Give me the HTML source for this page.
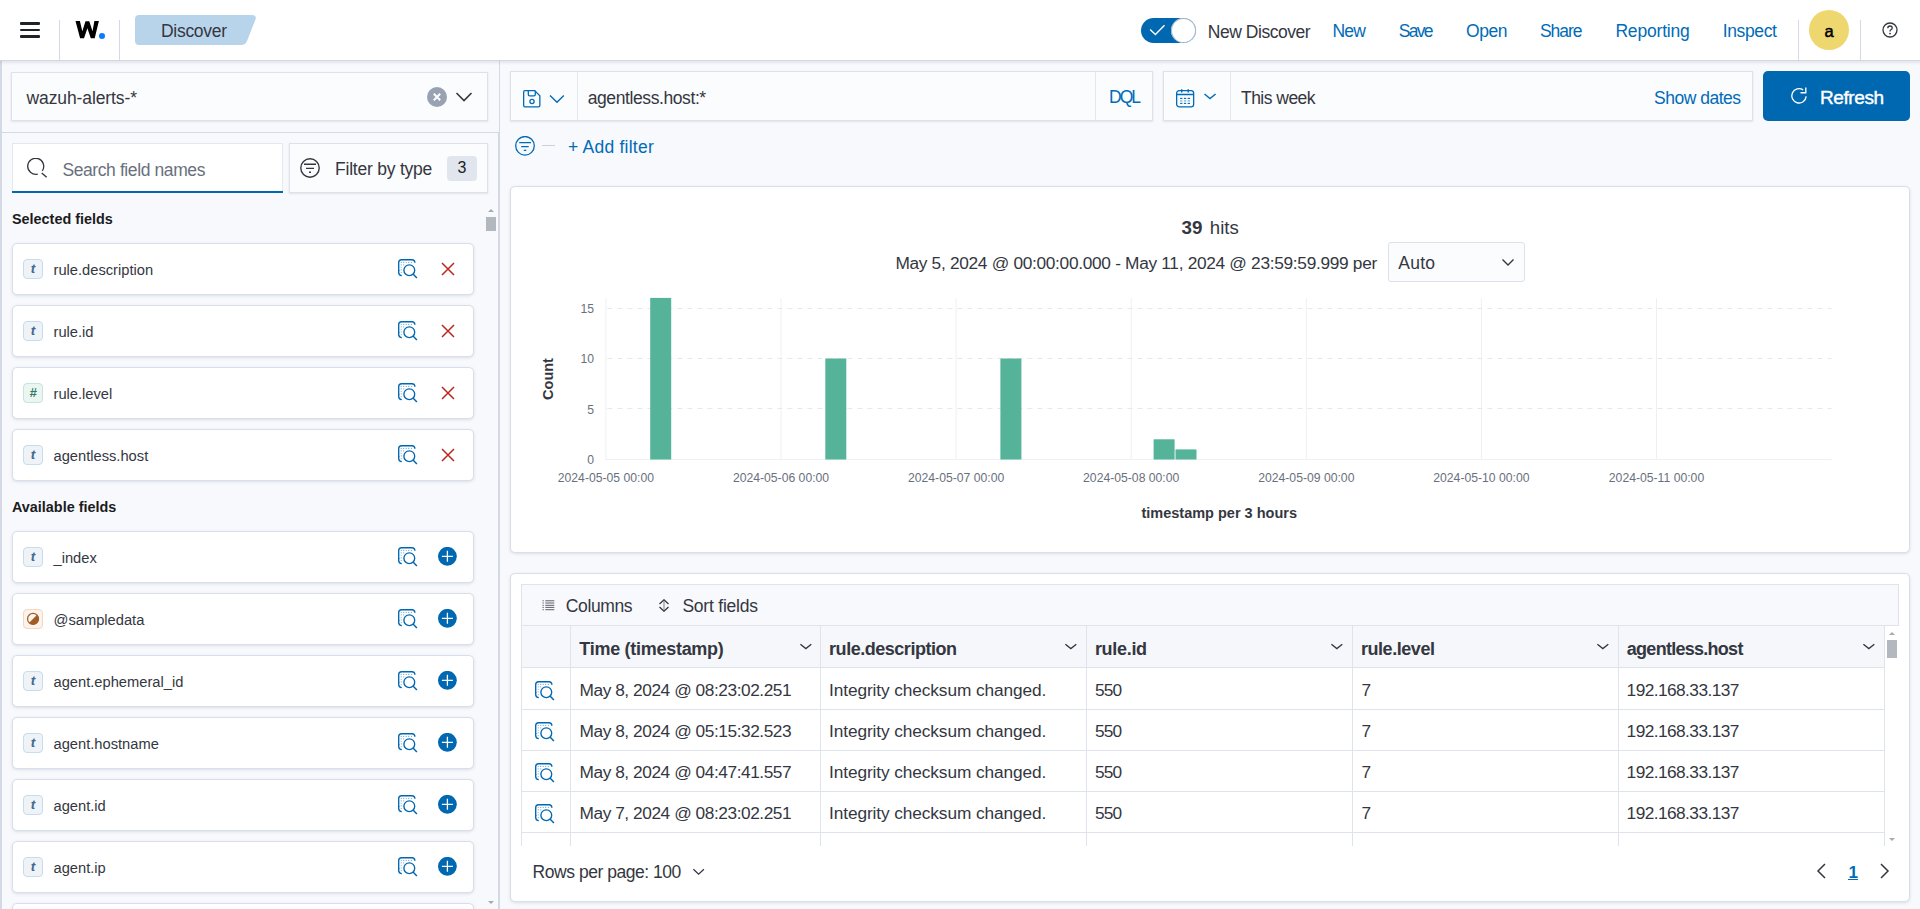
<!DOCTYPE html>
<html><head><meta charset="utf-8"><title>Discover</title>
<style>
html,body{margin:0;padding:0;}
body{width:1920px;height:909px;overflow:hidden;position:relative;background:#f8f9fc;font-family:"Liberation Sans",sans-serif;}
.t{position:absolute;line-height:1;white-space:nowrap;}
.r{position:absolute;}
</style></head><body>
<div class="r" style="left:0px;top:0px;width:1920px;height:60px;background:#fff;"></div>
<div class="r" style="left:0px;top:60px;width:1920px;height:1px;background:#d1d8e3;"></div>
<div class="r" style="left:20px;top:22.3px;width:20px;height:2.5px;background:#20222a;border-radius:1px;"></div>
<div class="r" style="left:20px;top:28.7px;width:20px;height:2.5px;background:#20222a;border-radius:1px;"></div>
<div class="r" style="left:20px;top:35.1px;width:20px;height:2.5px;background:#20222a;border-radius:1px;"></div>
<div class="r" style="left:59px;top:20px;width:1px;height:40px;background:#d3dae6;"></div>
<div class="r" style="left:119px;top:20px;width:1px;height:40px;background:#d3dae6;"></div>
<svg class="r" style="left:0;top:0" width="120" height="60" viewBox="0 0 120 60"><path d="M75.5 21 L79.9 21 L82.3 31.2 L85.5 21.3 L89.3 21.3 L92.5 31.2 L94.4 21 L98.9 21 L94.7 38.2 L90.8 38.2 L87.4 28.2 L84 38.2 L80.1 38.2 Z" fill="#000"/></svg>
<div class="r" style="left:99px;top:33px;width:5.8px;height:5.8px;background:#0a7bff;border-radius:50%;"></div>
<svg class="r" style="left:135px;top:15px;" width="122" height="30" viewBox="0 0 122 30" fill="none"><path d="M4 0 H117 Q122 0 120.5 4.5 L112 26 Q110.5 30 106 30 H4 Q0 30 0 26 V4 Q0 0 4 0 Z" fill="#b8d4ea"/></svg>
<div class="t" style="left:161.0px;top:22.99px;font-size:17.5px;color:#343741;letter-spacing:-0.295px;">Discover</div>
<div class="r" style="left:1141px;top:18px;width:55px;height:25px;background:#0067b1;border-radius:13px;"></div>
<svg class="r" style="left:1149px;top:23px;" width="17" height="14" viewBox="0 0 17 14" fill="none"><path d="M1.1 6.4 L6.4 11.6 L15.5 2.3" stroke="#fff" stroke-width="1.4" fill="none"/></svg>
<div class="r" style="left:1171px;top:18px;width:25px;height:25px;background:#fff;border-radius:50%;box-shadow:inset 0 0 0 1px #9fb3c8;"></div>
<div class="t" style="left:1207.8px;top:24.49px;font-size:17.5px;color:#343741;letter-spacing:-0.467px;">New Discover</div>
<div class="t" style="left:1332.5px;top:23.19px;font-size:17.5px;color:#006bb8;letter-spacing:-0.781px;">New</div>
<div class="t" style="left:1398.75px;top:23.19px;font-size:17.5px;color:#006bb8;letter-spacing:-1.73px;">Save</div>
<div class="t" style="left:1466.0px;top:23.19px;font-size:17.5px;color:#006bb8;letter-spacing:-0.438px;">Open</div>
<div class="t" style="left:1540.0px;top:23.19px;font-size:17.5px;color:#006bb8;letter-spacing:-1.05px;">Share</div>
<div class="t" style="left:1615.4px;top:23.19px;font-size:17.5px;color:#006bb8;letter-spacing:-0.185px;">Reporting</div>
<div class="t" style="left:1722.7px;top:23.19px;font-size:17.5px;color:#006bb8;letter-spacing:-0.37px;">Inspect</div>
<div class="r" style="left:1798px;top:20px;width:1px;height:40px;background:#d3dae6;"></div>
<div class="r" style="left:1809px;top:10px;width:40px;height:40px;background:#efd76f;border-radius:50%;"></div>
<div class="t" style="left:1829px;top:23.03px;font-size:16.5px;color:#000;transform:translateX(-50%);-webkit-text-stroke:0.5px #000;">a</div>
<div class="r" style="left:1860px;top:20px;width:1px;height:40px;background:#d3dae6;"></div>
<svg class="r" style="left:1882px;top:22px;" width="16" height="16" viewBox="0 0 16 16" fill="none"><circle cx="8" cy="8" r="7" stroke="#343741" stroke-width="1.3"/><path d="M5.8 6.2 Q5.8 4 8 4 Q10.2 4 10.2 6 Q10.2 7.3 8.6 8 Q8 8.4 8 9.6" stroke="#343741" stroke-width="1.3" fill="none"/><circle cx="8" cy="11.6" r="0.9" fill="#343741"/></svg>
<div class="r" style="left:0px;top:61px;width:500px;height:848px;background:#f8f9fc;"></div>
<div class="r" style="left:0px;top:61px;width:2px;height:848px;background:#d3dae6;"></div>
<div class="r" style="left:499px;top:61px;width:1px;height:848px;background:#d3dae6;"></div>
<div class="r" style="left:498px;top:132px;width:1px;height:777px;background:#d3dae6;"></div>
<div class="r" style="left:1px;top:132px;width:498px;height:1px;background:#d3dae6;"></div>
<div class="r" style="left:11px;top:72px;width:477px;height:49px;background:#fbfcfd;border:1px solid #dde2ea;box-sizing:border-box;box-shadow:0 1px 2px rgba(152,162,179,.25);"></div>
<div class="t" style="left:26.53px;top:90.19px;font-size:17.5px;color:#343741;letter-spacing:-0.105px;">wazuh-alerts-*</div>
<svg class="r" style="left:427px;top:87px;" width="20" height="20" viewBox="0 0 20 20" fill="none"><circle cx="10" cy="10" r="10" fill="#98a2b3"/><path d="M6.8 6.8 L13.2 13.2 M13.2 6.8 L6.8 13.2" stroke="#fff" stroke-width="2"/></svg>
<svg class="r" style="left:455px;top:91px;" width="18" height="12" viewBox="0 0 18 12" fill="none"><path d="M1.5 2 L9 9.5 L16.5 2" stroke="#343741" stroke-width="1.6" fill="none"/></svg>
<div class="r" style="left:12px;top:143px;width:271px;height:50px;background:#fff;border:1px solid #e4e8ef;border-bottom:none;box-sizing:border-box;"></div>
<div class="r" style="left:12px;top:191px;width:271px;height:2px;background:#0067b1;"></div>
<svg class="r" style="left:27px;top:158px;" width="21" height="21" viewBox="0 0 21 21" fill="none"><path d="M10.77 16.03 A8 8 0 1 1 15.25 12.89" stroke="#343741" stroke-width="1.3" fill="none"/><path d="M14.7 14.9 L19.65 19.3" stroke="#343741" stroke-width="1.4"/></svg>
<div class="t" style="left:62.4px;top:162.19px;font-size:17.5px;color:#69707d;letter-spacing:-0.4px;">Search field names</div>
<div class="r" style="left:289px;top:143px;width:199px;height:50px;background:#fbfcfd;border:1px solid #dde2ea;box-sizing:border-box;box-shadow:0 1px 2px rgba(152,162,179,.25);"></div>
<svg class="r" style="left:300px;top:158px;" width="20" height="20" viewBox="0 0 20 20" fill="none"><circle cx="10" cy="10" r="9.2" stroke="#343741" stroke-width="1.4"/><path d="M4 6.3 H16 M6 10.4 H14 M9 14.3 H11" stroke="#343741" stroke-width="1.4"/></svg>
<div class="t" style="left:335.0px;top:161.49px;font-size:17.5px;color:#343741;letter-spacing:-0.221px;">Filter by type</div>
<div class="r" style="left:447px;top:156px;width:30px;height:25px;background:#e0e5ee;border-radius:4px;"></div>
<div class="t" style="left:462px;top:159.96px;font-size:16px;color:#1a1c21;transform:translateX(-50%);">3</div>
<svg class="r" style="left:488px;top:209px;" width="6" height="3" viewBox="0 0 6 3" fill="none"><path d="M0 3 L3 0 L6 3 Z" fill="#a6aab1"/></svg>
<div class="r" style="left:486px;top:217px;width:10px;height:14px;background:#b3b7be;"></div>
<svg class="r" style="left:488px;top:901px;" width="6" height="3" viewBox="0 0 6 3" fill="none"><path d="M0 0 L3 3 L6 0 Z" fill="#a6aab1"/></svg>
<div class="t" style="left:12px;top:211.81px;font-size:14.4px;color:#1a1c21;font-weight:700;">Selected fields</div>
<div class="t" style="left:12px;top:499.81px;font-size:14.4px;color:#1a1c21;font-weight:700;">Available fields</div>
<div class="r" style="left:12px;top:243px;width:462px;height:52px;background:#fff;border:1px solid #d9dfe8;border-radius:5px;box-sizing:border-box;box-shadow:0 1px 3px rgba(152,162,179,.3);"></div>
<div class="r" style="left:23px;top:259px;width:20px;height:20px;background:#eef3f8;border:1px solid #c9dcec;border-radius:4px;box-sizing:border-box;"></div>
<div class="t" style="left:23px;top:261px;width:20px;text-align:center;font-size:13.5px;line-height:16px;font-weight:700;font-style:italic;color:#42698f;">t</div>
<div class="t" style="left:53.5px;top:262.56px;font-size:14.7px;color:#343741;">rule.description</div>
<svg class="r" style="left:398px;top:259px;" width="20" height="20" viewBox="0 0 20 20" fill="none"><path d="M0.7 12 V3.6 Q0.7 0.7 3.6 0.7 H14 Q16.8 0.7 16.9 3.8" stroke="#0067b1" stroke-width="1.35" fill="none"/><path d="M0.7 11 V13.6 Q0.7 16.5 3.8 16.6" stroke="#0067b1" stroke-width="1.35" fill="none"/><g fill="#0067b1" opacity="0.55"><circle cx="3.2" cy="3.4" r="0.55"/><circle cx="5.7" cy="3.4" r="0.6"/><circle cx="8.2" cy="3.4" r="0.55"/><circle cx="10.7" cy="3.4" r="0.6"/><circle cx="13.4" cy="3.4" r="0.55"/><circle cx="3.2" cy="5.8" r="0.6"/><circle cx="5.7" cy="5.8" r="0.6"/><circle cx="3.2" cy="8.3" r="0.55"/><circle cx="3.2" cy="10.8" r="0.6"/><circle cx="3.2" cy="13.6" r="0.55"/></g><circle cx="11.3" cy="11.2" r="5.4" stroke="#0067b1" stroke-width="1.35" fill="none"/><path d="M15 14.9 L18.9 18.9" stroke="#0067b1" stroke-width="1.45"/></svg>
<svg class="r" style="left:441px;top:262px;" width="14" height="14" viewBox="0 0 14 14" fill="none"><path d="M1 1 L13 13 M13 1 L1 13" stroke="#bd271e" stroke-width="1.5"/></svg>
<div class="r" style="left:12px;top:305px;width:462px;height:52px;background:#fff;border:1px solid #d9dfe8;border-radius:5px;box-sizing:border-box;box-shadow:0 1px 3px rgba(152,162,179,.3);"></div>
<div class="r" style="left:23px;top:321px;width:20px;height:20px;background:#eef3f8;border:1px solid #c9dcec;border-radius:4px;box-sizing:border-box;"></div>
<div class="t" style="left:23px;top:323px;width:20px;text-align:center;font-size:13.5px;line-height:16px;font-weight:700;font-style:italic;color:#42698f;">t</div>
<div class="t" style="left:53.5px;top:324.56px;font-size:14.7px;color:#343741;">rule.id</div>
<svg class="r" style="left:398px;top:321px;" width="20" height="20" viewBox="0 0 20 20" fill="none"><path d="M0.7 12 V3.6 Q0.7 0.7 3.6 0.7 H14 Q16.8 0.7 16.9 3.8" stroke="#0067b1" stroke-width="1.35" fill="none"/><path d="M0.7 11 V13.6 Q0.7 16.5 3.8 16.6" stroke="#0067b1" stroke-width="1.35" fill="none"/><g fill="#0067b1" opacity="0.55"><circle cx="3.2" cy="3.4" r="0.55"/><circle cx="5.7" cy="3.4" r="0.6"/><circle cx="8.2" cy="3.4" r="0.55"/><circle cx="10.7" cy="3.4" r="0.6"/><circle cx="13.4" cy="3.4" r="0.55"/><circle cx="3.2" cy="5.8" r="0.6"/><circle cx="5.7" cy="5.8" r="0.6"/><circle cx="3.2" cy="8.3" r="0.55"/><circle cx="3.2" cy="10.8" r="0.6"/><circle cx="3.2" cy="13.6" r="0.55"/></g><circle cx="11.3" cy="11.2" r="5.4" stroke="#0067b1" stroke-width="1.35" fill="none"/><path d="M15 14.9 L18.9 18.9" stroke="#0067b1" stroke-width="1.45"/></svg>
<svg class="r" style="left:441px;top:324px;" width="14" height="14" viewBox="0 0 14 14" fill="none"><path d="M1 1 L13 13 M13 1 L1 13" stroke="#bd271e" stroke-width="1.5"/></svg>
<div class="r" style="left:12px;top:367px;width:462px;height:52px;background:#fff;border:1px solid #d9dfe8;border-radius:5px;box-sizing:border-box;box-shadow:0 1px 3px rgba(152,162,179,.3);"></div>
<div class="r" style="left:23px;top:383px;width:20px;height:20px;background:#eaf6f1;border:1px solid #c4e5d8;border-radius:4px;box-sizing:border-box;"></div>
<div class="t" style="left:23px;top:385px;width:20px;text-align:center;font-size:13px;line-height:16px;font-weight:700;font-style:italic;color:#387765;">#</div>
<div class="t" style="left:53.5px;top:386.56px;font-size:14.7px;color:#343741;">rule.level</div>
<svg class="r" style="left:398px;top:383px;" width="20" height="20" viewBox="0 0 20 20" fill="none"><path d="M0.7 12 V3.6 Q0.7 0.7 3.6 0.7 H14 Q16.8 0.7 16.9 3.8" stroke="#0067b1" stroke-width="1.35" fill="none"/><path d="M0.7 11 V13.6 Q0.7 16.5 3.8 16.6" stroke="#0067b1" stroke-width="1.35" fill="none"/><g fill="#0067b1" opacity="0.55"><circle cx="3.2" cy="3.4" r="0.55"/><circle cx="5.7" cy="3.4" r="0.6"/><circle cx="8.2" cy="3.4" r="0.55"/><circle cx="10.7" cy="3.4" r="0.6"/><circle cx="13.4" cy="3.4" r="0.55"/><circle cx="3.2" cy="5.8" r="0.6"/><circle cx="5.7" cy="5.8" r="0.6"/><circle cx="3.2" cy="8.3" r="0.55"/><circle cx="3.2" cy="10.8" r="0.6"/><circle cx="3.2" cy="13.6" r="0.55"/></g><circle cx="11.3" cy="11.2" r="5.4" stroke="#0067b1" stroke-width="1.35" fill="none"/><path d="M15 14.9 L18.9 18.9" stroke="#0067b1" stroke-width="1.45"/></svg>
<svg class="r" style="left:441px;top:386px;" width="14" height="14" viewBox="0 0 14 14" fill="none"><path d="M1 1 L13 13 M13 1 L1 13" stroke="#bd271e" stroke-width="1.5"/></svg>
<div class="r" style="left:12px;top:429px;width:462px;height:52px;background:#fff;border:1px solid #d9dfe8;border-radius:5px;box-sizing:border-box;box-shadow:0 1px 3px rgba(152,162,179,.3);"></div>
<div class="r" style="left:23px;top:445px;width:20px;height:20px;background:#eef3f8;border:1px solid #c9dcec;border-radius:4px;box-sizing:border-box;"></div>
<div class="t" style="left:23px;top:447px;width:20px;text-align:center;font-size:13.5px;line-height:16px;font-weight:700;font-style:italic;color:#42698f;">t</div>
<div class="t" style="left:53.5px;top:448.56px;font-size:14.7px;color:#343741;">agentless.host</div>
<svg class="r" style="left:398px;top:445px;" width="20" height="20" viewBox="0 0 20 20" fill="none"><path d="M0.7 12 V3.6 Q0.7 0.7 3.6 0.7 H14 Q16.8 0.7 16.9 3.8" stroke="#0067b1" stroke-width="1.35" fill="none"/><path d="M0.7 11 V13.6 Q0.7 16.5 3.8 16.6" stroke="#0067b1" stroke-width="1.35" fill="none"/><g fill="#0067b1" opacity="0.55"><circle cx="3.2" cy="3.4" r="0.55"/><circle cx="5.7" cy="3.4" r="0.6"/><circle cx="8.2" cy="3.4" r="0.55"/><circle cx="10.7" cy="3.4" r="0.6"/><circle cx="13.4" cy="3.4" r="0.55"/><circle cx="3.2" cy="5.8" r="0.6"/><circle cx="5.7" cy="5.8" r="0.6"/><circle cx="3.2" cy="8.3" r="0.55"/><circle cx="3.2" cy="10.8" r="0.6"/><circle cx="3.2" cy="13.6" r="0.55"/></g><circle cx="11.3" cy="11.2" r="5.4" stroke="#0067b1" stroke-width="1.35" fill="none"/><path d="M15 14.9 L18.9 18.9" stroke="#0067b1" stroke-width="1.45"/></svg>
<svg class="r" style="left:441px;top:448px;" width="14" height="14" viewBox="0 0 14 14" fill="none"><path d="M1 1 L13 13 M13 1 L1 13" stroke="#bd271e" stroke-width="1.5"/></svg>
<div class="r" style="left:12px;top:531px;width:462px;height:52px;background:#fff;border:1px solid #d9dfe8;border-radius:5px;box-sizing:border-box;box-shadow:0 1px 3px rgba(152,162,179,.3);"></div>
<div class="r" style="left:23px;top:547px;width:20px;height:20px;background:#eef3f8;border:1px solid #c9dcec;border-radius:4px;box-sizing:border-box;"></div>
<div class="t" style="left:23px;top:549px;width:20px;text-align:center;font-size:13.5px;line-height:16px;font-weight:700;font-style:italic;color:#42698f;">t</div>
<div class="t" style="left:53.5px;top:550.56px;font-size:14.7px;color:#343741;">_index</div>
<svg class="r" style="left:398px;top:547px;" width="20" height="20" viewBox="0 0 20 20" fill="none"><path d="M0.7 12 V3.6 Q0.7 0.7 3.6 0.7 H14 Q16.8 0.7 16.9 3.8" stroke="#0067b1" stroke-width="1.35" fill="none"/><path d="M0.7 11 V13.6 Q0.7 16.5 3.8 16.6" stroke="#0067b1" stroke-width="1.35" fill="none"/><g fill="#0067b1" opacity="0.55"><circle cx="3.2" cy="3.4" r="0.55"/><circle cx="5.7" cy="3.4" r="0.6"/><circle cx="8.2" cy="3.4" r="0.55"/><circle cx="10.7" cy="3.4" r="0.6"/><circle cx="13.4" cy="3.4" r="0.55"/><circle cx="3.2" cy="5.8" r="0.6"/><circle cx="5.7" cy="5.8" r="0.6"/><circle cx="3.2" cy="8.3" r="0.55"/><circle cx="3.2" cy="10.8" r="0.6"/><circle cx="3.2" cy="13.6" r="0.55"/></g><circle cx="11.3" cy="11.2" r="5.4" stroke="#0067b1" stroke-width="1.35" fill="none"/><path d="M15 14.9 L18.9 18.9" stroke="#0067b1" stroke-width="1.45"/></svg>
<svg class="r" style="left:438px;top:547px;" width="19" height="19" viewBox="0 0 19 19" fill="none"><circle cx="9.4" cy="9.3" r="9.4" fill="#0067b1"/><path d="M9.4 3.8 V14.8 M3.9 9.3 H14.9" stroke="#fff" stroke-width="1.3"/></svg>
<div class="r" style="left:12px;top:593px;width:462px;height:52px;background:#fff;border:1px solid #d9dfe8;border-radius:5px;box-sizing:border-box;box-shadow:0 1px 3px rgba(152,162,179,.3);"></div>
<div class="r" style="left:23px;top:609px;width:20px;height:20px;background:#fcf3ec;border:1px solid #f3d7c0;border-radius:4px;box-sizing:border-box;"></div>
<svg class="r" style="left:26px;top:612px;" width="14" height="14" viewBox="0 0 14 14" fill="none"><circle cx="7.05" cy="6.9" r="5.5" stroke="#a15b25" stroke-width="1.2" fill="none"/><path d="M10.94 3.01 A5.5 5.5 0 0 1 3.16 10.79 Z" fill="#a15b25"/></svg>
<div class="t" style="left:53.5px;top:612.56px;font-size:14.7px;color:#343741;">@sampledata</div>
<svg class="r" style="left:398px;top:609px;" width="20" height="20" viewBox="0 0 20 20" fill="none"><path d="M0.7 12 V3.6 Q0.7 0.7 3.6 0.7 H14 Q16.8 0.7 16.9 3.8" stroke="#0067b1" stroke-width="1.35" fill="none"/><path d="M0.7 11 V13.6 Q0.7 16.5 3.8 16.6" stroke="#0067b1" stroke-width="1.35" fill="none"/><g fill="#0067b1" opacity="0.55"><circle cx="3.2" cy="3.4" r="0.55"/><circle cx="5.7" cy="3.4" r="0.6"/><circle cx="8.2" cy="3.4" r="0.55"/><circle cx="10.7" cy="3.4" r="0.6"/><circle cx="13.4" cy="3.4" r="0.55"/><circle cx="3.2" cy="5.8" r="0.6"/><circle cx="5.7" cy="5.8" r="0.6"/><circle cx="3.2" cy="8.3" r="0.55"/><circle cx="3.2" cy="10.8" r="0.6"/><circle cx="3.2" cy="13.6" r="0.55"/></g><circle cx="11.3" cy="11.2" r="5.4" stroke="#0067b1" stroke-width="1.35" fill="none"/><path d="M15 14.9 L18.9 18.9" stroke="#0067b1" stroke-width="1.45"/></svg>
<svg class="r" style="left:438px;top:609px;" width="19" height="19" viewBox="0 0 19 19" fill="none"><circle cx="9.4" cy="9.3" r="9.4" fill="#0067b1"/><path d="M9.4 3.8 V14.8 M3.9 9.3 H14.9" stroke="#fff" stroke-width="1.3"/></svg>
<div class="r" style="left:12px;top:655px;width:462px;height:52px;background:#fff;border:1px solid #d9dfe8;border-radius:5px;box-sizing:border-box;box-shadow:0 1px 3px rgba(152,162,179,.3);"></div>
<div class="r" style="left:23px;top:671px;width:20px;height:20px;background:#eef3f8;border:1px solid #c9dcec;border-radius:4px;box-sizing:border-box;"></div>
<div class="t" style="left:23px;top:673px;width:20px;text-align:center;font-size:13.5px;line-height:16px;font-weight:700;font-style:italic;color:#42698f;">t</div>
<div class="t" style="left:53.5px;top:674.56px;font-size:14.7px;color:#343741;">agent.ephemeral_id</div>
<svg class="r" style="left:398px;top:671px;" width="20" height="20" viewBox="0 0 20 20" fill="none"><path d="M0.7 12 V3.6 Q0.7 0.7 3.6 0.7 H14 Q16.8 0.7 16.9 3.8" stroke="#0067b1" stroke-width="1.35" fill="none"/><path d="M0.7 11 V13.6 Q0.7 16.5 3.8 16.6" stroke="#0067b1" stroke-width="1.35" fill="none"/><g fill="#0067b1" opacity="0.55"><circle cx="3.2" cy="3.4" r="0.55"/><circle cx="5.7" cy="3.4" r="0.6"/><circle cx="8.2" cy="3.4" r="0.55"/><circle cx="10.7" cy="3.4" r="0.6"/><circle cx="13.4" cy="3.4" r="0.55"/><circle cx="3.2" cy="5.8" r="0.6"/><circle cx="5.7" cy="5.8" r="0.6"/><circle cx="3.2" cy="8.3" r="0.55"/><circle cx="3.2" cy="10.8" r="0.6"/><circle cx="3.2" cy="13.6" r="0.55"/></g><circle cx="11.3" cy="11.2" r="5.4" stroke="#0067b1" stroke-width="1.35" fill="none"/><path d="M15 14.9 L18.9 18.9" stroke="#0067b1" stroke-width="1.45"/></svg>
<svg class="r" style="left:438px;top:671px;" width="19" height="19" viewBox="0 0 19 19" fill="none"><circle cx="9.4" cy="9.3" r="9.4" fill="#0067b1"/><path d="M9.4 3.8 V14.8 M3.9 9.3 H14.9" stroke="#fff" stroke-width="1.3"/></svg>
<div class="r" style="left:12px;top:717px;width:462px;height:52px;background:#fff;border:1px solid #d9dfe8;border-radius:5px;box-sizing:border-box;box-shadow:0 1px 3px rgba(152,162,179,.3);"></div>
<div class="r" style="left:23px;top:733px;width:20px;height:20px;background:#eef3f8;border:1px solid #c9dcec;border-radius:4px;box-sizing:border-box;"></div>
<div class="t" style="left:23px;top:735px;width:20px;text-align:center;font-size:13.5px;line-height:16px;font-weight:700;font-style:italic;color:#42698f;">t</div>
<div class="t" style="left:53.5px;top:736.56px;font-size:14.7px;color:#343741;">agent.hostname</div>
<svg class="r" style="left:398px;top:733px;" width="20" height="20" viewBox="0 0 20 20" fill="none"><path d="M0.7 12 V3.6 Q0.7 0.7 3.6 0.7 H14 Q16.8 0.7 16.9 3.8" stroke="#0067b1" stroke-width="1.35" fill="none"/><path d="M0.7 11 V13.6 Q0.7 16.5 3.8 16.6" stroke="#0067b1" stroke-width="1.35" fill="none"/><g fill="#0067b1" opacity="0.55"><circle cx="3.2" cy="3.4" r="0.55"/><circle cx="5.7" cy="3.4" r="0.6"/><circle cx="8.2" cy="3.4" r="0.55"/><circle cx="10.7" cy="3.4" r="0.6"/><circle cx="13.4" cy="3.4" r="0.55"/><circle cx="3.2" cy="5.8" r="0.6"/><circle cx="5.7" cy="5.8" r="0.6"/><circle cx="3.2" cy="8.3" r="0.55"/><circle cx="3.2" cy="10.8" r="0.6"/><circle cx="3.2" cy="13.6" r="0.55"/></g><circle cx="11.3" cy="11.2" r="5.4" stroke="#0067b1" stroke-width="1.35" fill="none"/><path d="M15 14.9 L18.9 18.9" stroke="#0067b1" stroke-width="1.45"/></svg>
<svg class="r" style="left:438px;top:733px;" width="19" height="19" viewBox="0 0 19 19" fill="none"><circle cx="9.4" cy="9.3" r="9.4" fill="#0067b1"/><path d="M9.4 3.8 V14.8 M3.9 9.3 H14.9" stroke="#fff" stroke-width="1.3"/></svg>
<div class="r" style="left:12px;top:779px;width:462px;height:52px;background:#fff;border:1px solid #d9dfe8;border-radius:5px;box-sizing:border-box;box-shadow:0 1px 3px rgba(152,162,179,.3);"></div>
<div class="r" style="left:23px;top:795px;width:20px;height:20px;background:#eef3f8;border:1px solid #c9dcec;border-radius:4px;box-sizing:border-box;"></div>
<div class="t" style="left:23px;top:797px;width:20px;text-align:center;font-size:13.5px;line-height:16px;font-weight:700;font-style:italic;color:#42698f;">t</div>
<div class="t" style="left:53.5px;top:798.56px;font-size:14.7px;color:#343741;">agent.id</div>
<svg class="r" style="left:398px;top:795px;" width="20" height="20" viewBox="0 0 20 20" fill="none"><path d="M0.7 12 V3.6 Q0.7 0.7 3.6 0.7 H14 Q16.8 0.7 16.9 3.8" stroke="#0067b1" stroke-width="1.35" fill="none"/><path d="M0.7 11 V13.6 Q0.7 16.5 3.8 16.6" stroke="#0067b1" stroke-width="1.35" fill="none"/><g fill="#0067b1" opacity="0.55"><circle cx="3.2" cy="3.4" r="0.55"/><circle cx="5.7" cy="3.4" r="0.6"/><circle cx="8.2" cy="3.4" r="0.55"/><circle cx="10.7" cy="3.4" r="0.6"/><circle cx="13.4" cy="3.4" r="0.55"/><circle cx="3.2" cy="5.8" r="0.6"/><circle cx="5.7" cy="5.8" r="0.6"/><circle cx="3.2" cy="8.3" r="0.55"/><circle cx="3.2" cy="10.8" r="0.6"/><circle cx="3.2" cy="13.6" r="0.55"/></g><circle cx="11.3" cy="11.2" r="5.4" stroke="#0067b1" stroke-width="1.35" fill="none"/><path d="M15 14.9 L18.9 18.9" stroke="#0067b1" stroke-width="1.45"/></svg>
<svg class="r" style="left:438px;top:795px;" width="19" height="19" viewBox="0 0 19 19" fill="none"><circle cx="9.4" cy="9.3" r="9.4" fill="#0067b1"/><path d="M9.4 3.8 V14.8 M3.9 9.3 H14.9" stroke="#fff" stroke-width="1.3"/></svg>
<div class="r" style="left:12px;top:841px;width:462px;height:52px;background:#fff;border:1px solid #d9dfe8;border-radius:5px;box-sizing:border-box;box-shadow:0 1px 3px rgba(152,162,179,.3);"></div>
<div class="r" style="left:23px;top:857px;width:20px;height:20px;background:#eef3f8;border:1px solid #c9dcec;border-radius:4px;box-sizing:border-box;"></div>
<div class="t" style="left:23px;top:859px;width:20px;text-align:center;font-size:13.5px;line-height:16px;font-weight:700;font-style:italic;color:#42698f;">t</div>
<div class="t" style="left:53.5px;top:860.56px;font-size:14.7px;color:#343741;">agent.ip</div>
<svg class="r" style="left:398px;top:857px;" width="20" height="20" viewBox="0 0 20 20" fill="none"><path d="M0.7 12 V3.6 Q0.7 0.7 3.6 0.7 H14 Q16.8 0.7 16.9 3.8" stroke="#0067b1" stroke-width="1.35" fill="none"/><path d="M0.7 11 V13.6 Q0.7 16.5 3.8 16.6" stroke="#0067b1" stroke-width="1.35" fill="none"/><g fill="#0067b1" opacity="0.55"><circle cx="3.2" cy="3.4" r="0.55"/><circle cx="5.7" cy="3.4" r="0.6"/><circle cx="8.2" cy="3.4" r="0.55"/><circle cx="10.7" cy="3.4" r="0.6"/><circle cx="13.4" cy="3.4" r="0.55"/><circle cx="3.2" cy="5.8" r="0.6"/><circle cx="5.7" cy="5.8" r="0.6"/><circle cx="3.2" cy="8.3" r="0.55"/><circle cx="3.2" cy="10.8" r="0.6"/><circle cx="3.2" cy="13.6" r="0.55"/></g><circle cx="11.3" cy="11.2" r="5.4" stroke="#0067b1" stroke-width="1.35" fill="none"/><path d="M15 14.9 L18.9 18.9" stroke="#0067b1" stroke-width="1.45"/></svg>
<svg class="r" style="left:438px;top:857px;" width="19" height="19" viewBox="0 0 19 19" fill="none"><circle cx="9.4" cy="9.3" r="9.4" fill="#0067b1"/><path d="M9.4 3.8 V14.8 M3.9 9.3 H14.9" stroke="#fff" stroke-width="1.3"/></svg>
<div class="r" style="left:12px;top:903px;width:462px;height:52px;background:#fff;border:1px solid #d9dfe8;border-radius:5px;box-sizing:border-box;box-shadow:0 1px 3px rgba(152,162,179,.3);"></div>
<div class="r" style="left:23px;top:919px;width:20px;height:20px;background:#eef3f8;border:1px solid #c9dcec;border-radius:4px;box-sizing:border-box;"></div>
<div class="t" style="left:23px;top:921px;width:20px;text-align:center;font-size:13.5px;line-height:16px;font-weight:700;font-style:italic;color:#42698f;">t</div>
<div class="t" style="left:53.5px;top:922.56px;font-size:14.7px;color:#343741;">agent.name</div>
<svg class="r" style="left:398px;top:919px;" width="20" height="20" viewBox="0 0 20 20" fill="none"><path d="M0.7 12 V3.6 Q0.7 0.7 3.6 0.7 H14 Q16.8 0.7 16.9 3.8" stroke="#0067b1" stroke-width="1.35" fill="none"/><path d="M0.7 11 V13.6 Q0.7 16.5 3.8 16.6" stroke="#0067b1" stroke-width="1.35" fill="none"/><g fill="#0067b1" opacity="0.55"><circle cx="3.2" cy="3.4" r="0.55"/><circle cx="5.7" cy="3.4" r="0.6"/><circle cx="8.2" cy="3.4" r="0.55"/><circle cx="10.7" cy="3.4" r="0.6"/><circle cx="13.4" cy="3.4" r="0.55"/><circle cx="3.2" cy="5.8" r="0.6"/><circle cx="5.7" cy="5.8" r="0.6"/><circle cx="3.2" cy="8.3" r="0.55"/><circle cx="3.2" cy="10.8" r="0.6"/><circle cx="3.2" cy="13.6" r="0.55"/></g><circle cx="11.3" cy="11.2" r="5.4" stroke="#0067b1" stroke-width="1.35" fill="none"/><path d="M15 14.9 L18.9 18.9" stroke="#0067b1" stroke-width="1.45"/></svg>
<svg class="r" style="left:438px;top:919px;" width="19" height="19" viewBox="0 0 19 19" fill="none"><circle cx="9.4" cy="9.3" r="9.4" fill="#0067b1"/><path d="M9.4 3.8 V14.8 M3.9 9.3 H14.9" stroke="#fff" stroke-width="1.3"/></svg>
<div class="r" style="left:510px;top:71px;width:643px;height:50px;background:#fbfcfd;border:1px solid #dde2ea;box-sizing:border-box;box-shadow:0 1px 2px rgba(152,162,179,.25);"></div>
<div class="r" style="left:577px;top:72px;width:1px;height:48px;background:#e3e7ee;"></div>
<div class="r" style="left:1095px;top:72px;width:1px;height:48px;background:#e3e7ee;"></div>
<svg class="r" style="left:523px;top:90px;" width="18" height="18" viewBox="0 0 18 18" fill="none"><path d="M2 0.65 H11.7 L16.85 5.8 V15.5 Q16.85 16.9 15.5 16.9 H2 Q0.65 16.9 0.65 15.5 V2 Q0.65 0.65 2 0.65 Z" stroke="#006bb8" stroke-width="1.3" fill="none"/><path d="M5.3 0.65 V4.5 Q5.3 5.9 6.7 5.9 H10.9 Q12.3 5.9 12.3 4.5 V0.65" stroke="#006bb8" stroke-width="1.3" fill="none"/><circle cx="9" cy="11.5" r="2.1" stroke="#006bb8" stroke-width="1.3"/></svg>
<svg class="r" style="left:548px;top:94px;" width="18" height="10" viewBox="0 0 18 10" fill="none"><path d="M2 1.5 L9 8.2 L15.8 1.5" stroke="#006bb8" stroke-width="1.4" fill="none"/></svg>
<div class="t" style="left:587.7px;top:90.19px;font-size:17.5px;color:#343741;letter-spacing:-0.402px;">agentless.host:*</div>
<div class="t" style="left:1109.0px;top:89.09px;font-size:17.5px;color:#006bb8;letter-spacing:-1.99px;">DQL</div>
<div class="r" style="left:1163px;top:71px;width:590px;height:50px;background:#fbfcfd;border:1px solid #dde2ea;box-sizing:border-box;box-shadow:0 1px 2px rgba(152,162,179,.25);"></div>
<div class="r" style="left:1230px;top:72px;width:1px;height:48px;background:#e3e7ee;"></div>
<svg class="r" style="left:1176px;top:89px;" width="19" height="20" viewBox="0 0 19 20" fill="none"><rect x="0.65" y="1.6" width="17" height="16.2" rx="2.6" stroke="#006bb8" stroke-width="1.3"/><path d="M5.7 0.2 V3.6 M12.2 0.2 V3.6 M0.6 5.5 H17.6" stroke="#006bb8" stroke-width="1.4"/><g fill="#006bb8"><rect x="4.1" y="8.85" width="2.3" height="1.1"/><rect x="7.9" y="8.85" width="2.3" height="1.1"/><rect x="11.7" y="8.85" width="2.3" height="1.1"/><rect x="4.1" y="11.35" width="2.3" height="1.1" opacity=".6"/><rect x="7.9" y="11.35" width="2.3" height="1.1" opacity=".6"/><rect x="11.7" y="11.35" width="2.3" height="1.1" opacity=".6"/><rect x="4.1" y="13.85" width="2.3" height="1.1"/><rect x="7.9" y="13.85" width="2.3" height="1.1"/><rect x="11.7" y="13.85" width="2.3" height="1.1"/></g></svg>
<svg class="r" style="left:1203px;top:92px;" width="14" height="9" viewBox="0 0 14 9" fill="none"><path d="M1.5 2 L7 6.5 L12.6 2" stroke="#006bb8" stroke-width="1.4" fill="none"/></svg>
<div class="t" style="left:1241.0px;top:90.09px;font-size:17.5px;color:#343741;letter-spacing:-0.525px;">This week</div>
<div class="t" style="left:1654.0px;top:90.09px;font-size:17.5px;color:#006bb8;letter-spacing:-0.494px;">Show dates</div>
<div class="r" style="left:1763px;top:71px;width:147px;height:50px;background:#0067b1;border-radius:5px;"></div>
<svg class="r" style="left:1790px;top:86px;" width="19" height="19" viewBox="0 0 19 19" fill="none"><path d="M16.17 10.43 A7.2 7.2 0 1 1 13.13 3.9" stroke="#fff" stroke-width="1.35" fill="none"/><path d="M15.8 1.4 V6.7 H10.5" stroke="#fff" stroke-width="1.35" fill="none"/></svg>
<div class="t" style="left:1820px;top:88.42px;font-size:19px;color:#fff;letter-spacing:-0.4px;-webkit-text-stroke:0.4px #fff;">Refresh</div>
<svg class="r" style="left:515px;top:136px;" width="21" height="21" viewBox="0 0 21 21" fill="none"><circle cx="10" cy="9.8" r="9.3" stroke="#006bb8" stroke-width="1.3"/><path d="M4.2 6.7 H16 M6.2 10.6 H13.7 M8.8 14.4 H11.3" stroke="#006bb8" stroke-width="1.3"/></svg>
<div class="r" style="left:542px;top:145px;width:13px;height:1px;background:#c9d1dd;"></div>
<div class="t" style="left:567.9px;top:139.19px;font-size:17.5px;color:#006bb8;letter-spacing:0.247px;">+ Add filter</div>
<div class="r" style="left:510px;top:186px;width:1400px;height:367px;background:#fff;border:1px solid #d9dfe8;border-radius:5px;box-sizing:border-box;box-shadow:0 1px 3px rgba(152,162,179,.3);"></div>
<div class="t" style="left:1181.5px;top:219.09px;font-size:18.8px;color:#343741;font-weight:700;">39</div>
<div class="t" style="left:1209.8px;top:219.26px;font-size:18.6px;color:#343741;">hits</div>
<div class="t" style="left:895.4px;top:254.86px;font-size:17.3px;color:#343741;letter-spacing:-0.304px;">May 5, 2024 @ 00:00:00.000 - May 11, 2024 @ 23:59:59.999 per</div>
<div class="r" style="left:1388px;top:242px;width:137px;height:40px;background:#fbfcfd;border:1px solid #dde2ea;border-radius:3px;box-sizing:border-box;"></div>
<div class="t" style="left:1398.3px;top:254.79px;font-size:17.5px;color:#343741;letter-spacing:0.234px;">Auto</div>
<svg class="r" style="left:1501px;top:258px;" width="14" height="9" viewBox="0 0 14 9" fill="none"><path d="M1.5 1.5 L7 7 L12.5 1.5" stroke="#343741" stroke-width="1.4" fill="none"/></svg>
<svg class="r" style="left:500px;top:0px" width="1400" height="560" viewBox="0 0 1400 560"><line x1="105.9" y1="298" x2="105.9" y2="459.5" stroke="#eef0f3" stroke-width="1"/><line x1="281.0" y1="298" x2="281.0" y2="459.5" stroke="#eef0f3" stroke-width="1"/><line x1="456.1" y1="298" x2="456.1" y2="459.5" stroke="#eef0f3" stroke-width="1"/><line x1="631.2" y1="298" x2="631.2" y2="459.5" stroke="#eef0f3" stroke-width="1"/><line x1="806.3" y1="298" x2="806.3" y2="459.5" stroke="#eef0f3" stroke-width="1"/><line x1="981.4" y1="298" x2="981.4" y2="459.5" stroke="#eef0f3" stroke-width="1"/><line x1="1156.5" y1="298" x2="1156.5" y2="459.5" stroke="#eef0f3" stroke-width="1"/><line x1="107.4" y1="308.5" x2="1331.6" y2="308.5" stroke="#e5e8ee" stroke-width="1" stroke-dasharray="5 5"/><line x1="107.4" y1="358.5" x2="1331.6" y2="358.5" stroke="#e5e8ee" stroke-width="1" stroke-dasharray="5 5"/><line x1="107.4" y1="408.5" x2="1331.6" y2="408.5" stroke="#e5e8ee" stroke-width="1" stroke-dasharray="5 5"/><line x1="105.9" y1="459.5" x2="1331.6" y2="459.5" stroke="#eef0f3" stroke-width="1"/><rect x="150.2" y="297.9" width="21.0" height="161.6" fill="#54b399"/><rect x="325.3" y="358.5" width="21.0" height="101.0" fill="#54b399"/><rect x="500.4" y="358.5" width="21.0" height="101.0" fill="#54b399"/><rect x="653.6" y="439.3" width="21.0" height="20.2" fill="#54b399"/><rect x="675.5" y="449.4" width="21.0" height="10.1" fill="#54b399"/></svg>
<div class="t" style="left:594px;top:454.17px;font-size:12.2px;color:#69707d;transform:translateX(-100%);">0</div>
<div class="t" style="left:594px;top:403.67px;font-size:12.2px;color:#69707d;transform:translateX(-100%);">5</div>
<div class="t" style="left:594px;top:353.17px;font-size:12.2px;color:#69707d;transform:translateX(-100%);">10</div>
<div class="t" style="left:594px;top:302.67px;font-size:12.2px;color:#69707d;transform:translateX(-100%);">15</div>
<div class="t" style="left:605.9px;top:471.67px;font-size:12.2px;color:#69707d;transform:translateX(-50%);">2024-05-05 00:00</div>
<div class="t" style="left:781.0px;top:471.67px;font-size:12.2px;color:#69707d;transform:translateX(-50%);">2024-05-06 00:00</div>
<div class="t" style="left:956.0999999999999px;top:471.67px;font-size:12.2px;color:#69707d;transform:translateX(-50%);">2024-05-07 00:00</div>
<div class="t" style="left:1131.1999999999998px;top:471.67px;font-size:12.2px;color:#69707d;transform:translateX(-50%);">2024-05-08 00:00</div>
<div class="t" style="left:1306.3px;top:471.67px;font-size:12.2px;color:#69707d;transform:translateX(-50%);">2024-05-09 00:00</div>
<div class="t" style="left:1481.4px;top:471.67px;font-size:12.2px;color:#69707d;transform:translateX(-50%);">2024-05-10 00:00</div>
<div class="t" style="left:1656.5px;top:471.67px;font-size:12.2px;color:#69707d;transform:translateX(-50%);">2024-05-11 00:00</div>
<div class="t" style="left:548px;top:379px;font-size:14.5px;font-weight:700;color:#343741;transform:translate(-50%,-50%) rotate(-90deg);">Count</div>
<div class="t" style="left:1219.2px;top:506.13px;font-size:14.5px;color:#343741;font-weight:700;transform:translateX(-50%);">timestamp per 3 hours</div>
<div class="r" style="left:510px;top:573px;width:1400px;height:329px;background:#fff;border:1px solid #d9dfe8;border-radius:5px;box-sizing:border-box;box-shadow:0 1px 3px rgba(152,162,179,.3);"></div>
<div class="r" style="left:521px;top:584px;width:1378px;height:42px;background:#f8f9fc;border:1px solid #dfe4ec;box-sizing:border-box;"></div>
<svg class="r" style="left:542px;top:600px;" width="13" height="11" viewBox="0 0 13 11" fill="none"><g fill="#5a606b"><rect x="0.5" y="0.3" width="1.3" height="1"/><rect x="0.5" y="2.5" width="1.3" height="1"/><rect x="0.5" y="4.8" width="1.3" height="1"/><rect x="0.5" y="6.9" width="1.3" height="1"/><rect x="0.5" y="9.2" width="1.3" height="1"/><rect x="3.3" y="0.3" width="9" height="1"/><rect x="3.3" y="2.5" width="9" height="1"/><rect x="3.3" y="4.8" width="9" height="1"/><rect x="3.3" y="6.9" width="9" height="1"/><rect x="3.3" y="9.2" width="9" height="1"/></g></svg>
<div class="t" style="left:565.8px;top:597.79px;font-size:17.5px;color:#343741;letter-spacing:-0.393px;">Columns</div>
<svg class="r" style="left:658px;top:599px;" width="12" height="13" viewBox="0 0 12 13" fill="none"><path d="M1.5 5 L6 0.8 L10.5 5 M1.5 8 L6 12.2 L10.5 8" stroke="#343741" stroke-width="1.3" fill="none"/><path d="M6 2 V11" stroke="#8a9099" stroke-width="1.2"/></svg>
<div class="t" style="left:682.4px;top:597.79px;font-size:17.5px;color:#343741;letter-spacing:-0.221px;">Sort fields</div>
<div class="r" style="left:521px;top:626px;width:1364px;height:220px;background:#fff;overflow:hidden;"></div>
<div class="r" style="left:521px;top:626px;width:1364px;height:42px;background:#f5f7fa;"></div>
<div class="r" style="left:521px;top:626px;width:1px;height:220px;background:#dfe4ec;"></div>
<div class="r" style="left:570px;top:626px;width:1px;height:220px;background:#dfe4ec;"></div>
<div class="r" style="left:820px;top:626px;width:1px;height:220px;background:#dfe4ec;"></div>
<div class="r" style="left:1086px;top:626px;width:1px;height:220px;background:#dfe4ec;"></div>
<div class="r" style="left:1352px;top:626px;width:1px;height:220px;background:#dfe4ec;"></div>
<div class="r" style="left:1618px;top:626px;width:1px;height:220px;background:#dfe4ec;"></div>
<div class="r" style="left:1884px;top:626px;width:1px;height:220px;background:#dfe4ec;"></div>
<div class="r" style="left:521px;top:667px;width:1364px;height:1px;background:#dfe4ec;"></div>
<div class="r" style="left:521px;top:709px;width:1364px;height:1px;background:#dfe4ec;"></div>
<div class="r" style="left:521px;top:750px;width:1364px;height:1px;background:#dfe4ec;"></div>
<div class="r" style="left:521px;top:791px;width:1364px;height:1px;background:#dfe4ec;"></div>
<div class="r" style="left:521px;top:832px;width:1364px;height:1px;background:#dfe4ec;"></div>
<div class="t" style="left:579.3px;top:639.76px;font-size:18px;color:#343741;font-weight:700;letter-spacing:-0.28px;">Time (timestamp)</div>
<svg class="r" style="left:798.5px;top:641px;" width="14" height="10" viewBox="0 0 14 10" fill="none"><path d="M1.4 3.2 L6.85 7.6 L12.3 3.2" stroke="#343741" stroke-width="1.3" fill="none"/></svg>
<div class="t" style="left:829.1px;top:639.76px;font-size:18px;color:#343741;font-weight:700;letter-spacing:-0.475px;">rule.description</div>
<svg class="r" style="left:1063.5px;top:641px;" width="14" height="10" viewBox="0 0 14 10" fill="none"><path d="M1.4 3.2 L6.85 7.6 L12.3 3.2" stroke="#343741" stroke-width="1.3" fill="none"/></svg>
<div class="t" style="left:1094.9px;top:639.76px;font-size:18px;color:#343741;font-weight:700;letter-spacing:-0.301px;">rule.id</div>
<svg class="r" style="left:1329.6px;top:641px;" width="14" height="10" viewBox="0 0 14 10" fill="none"><path d="M1.4 3.2 L6.85 7.6 L12.3 3.2" stroke="#343741" stroke-width="1.3" fill="none"/></svg>
<div class="t" style="left:1360.9px;top:639.76px;font-size:18px;color:#343741;font-weight:700;letter-spacing:-0.439px;">rule.level</div>
<svg class="r" style="left:1595.7px;top:641px;" width="14" height="10" viewBox="0 0 14 10" fill="none"><path d="M1.4 3.2 L6.85 7.6 L12.3 3.2" stroke="#343741" stroke-width="1.3" fill="none"/></svg>
<div class="t" style="left:1626.8px;top:639.76px;font-size:18px;color:#343741;font-weight:700;letter-spacing:-0.726px;">agentless.host</div>
<svg class="r" style="left:1861.5px;top:641px;" width="14" height="10" viewBox="0 0 14 10" fill="none"><path d="M1.4 3.2 L6.85 7.6 L12.3 3.2" stroke="#343741" stroke-width="1.3" fill="none"/></svg>
<svg class="r" style="left:535px;top:681px;" width="20" height="20" viewBox="0 0 20 20" fill="none"><path d="M0.7 12 V3.6 Q0.7 0.7 3.6 0.7 H14 Q16.8 0.7 16.9 3.8" stroke="#0067b1" stroke-width="1.35" fill="none"/><path d="M0.7 11 V13.6 Q0.7 16.5 3.8 16.6" stroke="#0067b1" stroke-width="1.35" fill="none"/><g fill="#0067b1" opacity="0.55"><circle cx="3.2" cy="3.4" r="0.55"/><circle cx="5.7" cy="3.4" r="0.6"/><circle cx="8.2" cy="3.4" r="0.55"/><circle cx="10.7" cy="3.4" r="0.6"/><circle cx="13.4" cy="3.4" r="0.55"/><circle cx="3.2" cy="5.8" r="0.6"/><circle cx="5.7" cy="5.8" r="0.6"/><circle cx="3.2" cy="8.3" r="0.55"/><circle cx="3.2" cy="10.8" r="0.6"/><circle cx="3.2" cy="13.6" r="0.55"/></g><circle cx="11.3" cy="11.2" r="5.4" stroke="#0067b1" stroke-width="1.35" fill="none"/><path d="M15 14.9 L18.9 18.9" stroke="#0067b1" stroke-width="1.45"/></svg>
<div class="t" style="left:579.5px;top:681.66px;font-size:17.3px;color:#343741;letter-spacing:-0.44px;">May 8, 2024 @ 08:23:02.251</div>
<div class="t" style="left:829.0px;top:681.66px;font-size:17.3px;color:#343741;letter-spacing:-0.104px;">Integrity checksum changed.</div>
<div class="t" style="left:1095.0px;top:681.66px;font-size:17.3px;color:#343741;letter-spacing:-0.883px;">550</div>
<div class="t" style="left:1361.5px;top:681.66px;font-size:17.3px;color:#343741;letter-spacing:0px;">7</div>
<div class="t" style="left:1626.6px;top:681.66px;font-size:17.3px;color:#343741;letter-spacing:-0.566px;">192.168.33.137</div>
<svg class="r" style="left:535px;top:722px;" width="20" height="20" viewBox="0 0 20 20" fill="none"><path d="M0.7 12 V3.6 Q0.7 0.7 3.6 0.7 H14 Q16.8 0.7 16.9 3.8" stroke="#0067b1" stroke-width="1.35" fill="none"/><path d="M0.7 11 V13.6 Q0.7 16.5 3.8 16.6" stroke="#0067b1" stroke-width="1.35" fill="none"/><g fill="#0067b1" opacity="0.55"><circle cx="3.2" cy="3.4" r="0.55"/><circle cx="5.7" cy="3.4" r="0.6"/><circle cx="8.2" cy="3.4" r="0.55"/><circle cx="10.7" cy="3.4" r="0.6"/><circle cx="13.4" cy="3.4" r="0.55"/><circle cx="3.2" cy="5.8" r="0.6"/><circle cx="5.7" cy="5.8" r="0.6"/><circle cx="3.2" cy="8.3" r="0.55"/><circle cx="3.2" cy="10.8" r="0.6"/><circle cx="3.2" cy="13.6" r="0.55"/></g><circle cx="11.3" cy="11.2" r="5.4" stroke="#0067b1" stroke-width="1.35" fill="none"/><path d="M15 14.9 L18.9 18.9" stroke="#0067b1" stroke-width="1.45"/></svg>
<div class="t" style="left:579.5px;top:722.66px;font-size:17.3px;color:#343741;letter-spacing:-0.44px;">May 8, 2024 @ 05:15:32.523</div>
<div class="t" style="left:829.0px;top:722.66px;font-size:17.3px;color:#343741;letter-spacing:-0.104px;">Integrity checksum changed.</div>
<div class="t" style="left:1095.0px;top:722.66px;font-size:17.3px;color:#343741;letter-spacing:-0.883px;">550</div>
<div class="t" style="left:1361.5px;top:722.66px;font-size:17.3px;color:#343741;letter-spacing:0px;">7</div>
<div class="t" style="left:1626.6px;top:722.66px;font-size:17.3px;color:#343741;letter-spacing:-0.566px;">192.168.33.137</div>
<svg class="r" style="left:535px;top:763px;" width="20" height="20" viewBox="0 0 20 20" fill="none"><path d="M0.7 12 V3.6 Q0.7 0.7 3.6 0.7 H14 Q16.8 0.7 16.9 3.8" stroke="#0067b1" stroke-width="1.35" fill="none"/><path d="M0.7 11 V13.6 Q0.7 16.5 3.8 16.6" stroke="#0067b1" stroke-width="1.35" fill="none"/><g fill="#0067b1" opacity="0.55"><circle cx="3.2" cy="3.4" r="0.55"/><circle cx="5.7" cy="3.4" r="0.6"/><circle cx="8.2" cy="3.4" r="0.55"/><circle cx="10.7" cy="3.4" r="0.6"/><circle cx="13.4" cy="3.4" r="0.55"/><circle cx="3.2" cy="5.8" r="0.6"/><circle cx="5.7" cy="5.8" r="0.6"/><circle cx="3.2" cy="8.3" r="0.55"/><circle cx="3.2" cy="10.8" r="0.6"/><circle cx="3.2" cy="13.6" r="0.55"/></g><circle cx="11.3" cy="11.2" r="5.4" stroke="#0067b1" stroke-width="1.35" fill="none"/><path d="M15 14.9 L18.9 18.9" stroke="#0067b1" stroke-width="1.45"/></svg>
<div class="t" style="left:579.5px;top:763.66px;font-size:17.3px;color:#343741;letter-spacing:-0.44px;">May 8, 2024 @ 04:47:41.557</div>
<div class="t" style="left:829.0px;top:763.66px;font-size:17.3px;color:#343741;letter-spacing:-0.104px;">Integrity checksum changed.</div>
<div class="t" style="left:1095.0px;top:763.66px;font-size:17.3px;color:#343741;letter-spacing:-0.883px;">550</div>
<div class="t" style="left:1361.5px;top:763.66px;font-size:17.3px;color:#343741;letter-spacing:0px;">7</div>
<div class="t" style="left:1626.6px;top:763.66px;font-size:17.3px;color:#343741;letter-spacing:-0.566px;">192.168.33.137</div>
<svg class="r" style="left:535px;top:804px;" width="20" height="20" viewBox="0 0 20 20" fill="none"><path d="M0.7 12 V3.6 Q0.7 0.7 3.6 0.7 H14 Q16.8 0.7 16.9 3.8" stroke="#0067b1" stroke-width="1.35" fill="none"/><path d="M0.7 11 V13.6 Q0.7 16.5 3.8 16.6" stroke="#0067b1" stroke-width="1.35" fill="none"/><g fill="#0067b1" opacity="0.55"><circle cx="3.2" cy="3.4" r="0.55"/><circle cx="5.7" cy="3.4" r="0.6"/><circle cx="8.2" cy="3.4" r="0.55"/><circle cx="10.7" cy="3.4" r="0.6"/><circle cx="13.4" cy="3.4" r="0.55"/><circle cx="3.2" cy="5.8" r="0.6"/><circle cx="5.7" cy="5.8" r="0.6"/><circle cx="3.2" cy="8.3" r="0.55"/><circle cx="3.2" cy="10.8" r="0.6"/><circle cx="3.2" cy="13.6" r="0.55"/></g><circle cx="11.3" cy="11.2" r="5.4" stroke="#0067b1" stroke-width="1.35" fill="none"/><path d="M15 14.9 L18.9 18.9" stroke="#0067b1" stroke-width="1.45"/></svg>
<div class="t" style="left:579.5px;top:804.66px;font-size:17.3px;color:#343741;letter-spacing:-0.44px;">May 7, 2024 @ 08:23:02.251</div>
<div class="t" style="left:829.0px;top:804.66px;font-size:17.3px;color:#343741;letter-spacing:-0.104px;">Integrity checksum changed.</div>
<div class="t" style="left:1095.0px;top:804.66px;font-size:17.3px;color:#343741;letter-spacing:-0.883px;">550</div>
<div class="t" style="left:1361.5px;top:804.66px;font-size:17.3px;color:#343741;letter-spacing:0px;">7</div>
<div class="t" style="left:1626.6px;top:804.66px;font-size:17.3px;color:#343741;letter-spacing:-0.566px;">192.168.33.137</div>
<svg class="r" style="left:1889px;top:632px;" width="6" height="3" viewBox="0 0 6 3" fill="none"><path d="M0 3 L3 0 L6 3 Z" fill="#a6aab1"/></svg>
<div class="r" style="left:1887px;top:640px;width:10px;height:18px;background:#b3b7be;"></div>
<svg class="r" style="left:1889px;top:838px;" width="6" height="3" viewBox="0 0 6 3" fill="none"><path d="M0 0 L3 3 L6 0 Z" fill="#a6aab1"/></svg>
<div class="t" style="left:532.6px;top:863.69px;font-size:17.5px;color:#343741;letter-spacing:-0.467px;">Rows per page: 100</div>
<svg class="r" style="left:692px;top:867px;" width="14" height="9" viewBox="0 0 14 9" fill="none"><path d="M1.4 2.3 L6.6 7.2 L11.9 2.3" stroke="#343741" stroke-width="1.3" fill="none"/></svg>
<svg class="r" style="left:1816px;top:862px;" width="11" height="18" viewBox="0 0 11 18" fill="none"><path d="M9 2 L2 9 L9 16" stroke="#343741" stroke-width="1.5" fill="none"/></svg>
<div class="t" style="left:1848.5px;top:863.61px;font-size:17px;color:#006bb8;font-weight:700;">1</div>
<div class="r" style="left:1848px;top:879px;width:10px;height:1.4px;background:#006bb8;"></div>
<svg class="r" style="left:1879px;top:862px;" width="11" height="18" viewBox="0 0 11 18" fill="none"><path d="M2 2 L9 9 L2 16" stroke="#343741" stroke-width="1.5" fill="none"/></svg>
<div class="r" style="left:0px;top:61px;width:1920px;height:4px;background:linear-gradient(rgba(120,125,135,.16),rgba(120,125,135,0));"></div>
</body></html>
